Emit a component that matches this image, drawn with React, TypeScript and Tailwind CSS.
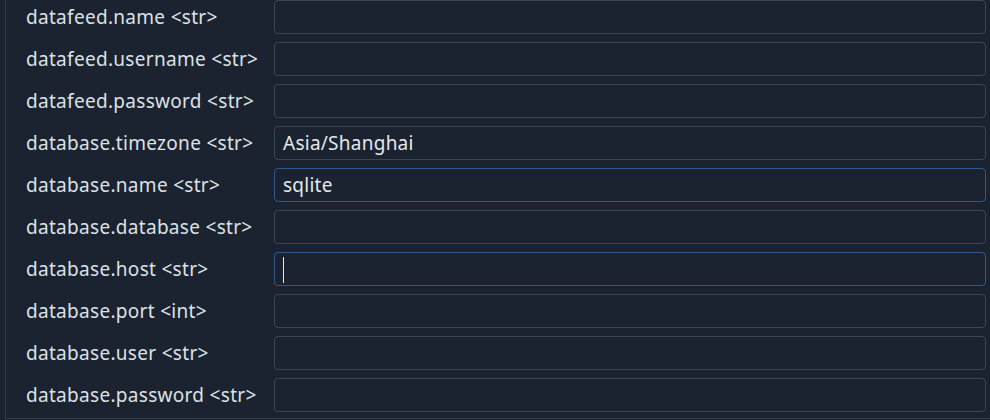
const fields: { label: string; value?: string; focus?: boolean; caret?: boolean }[] = [
  { label: "datafeed.name <str>" },
  { label: "datafeed.username <str>" },
  { label: "datafeed.password <str>" },
  { label: "database.timezone <str>", value: "Asia/Shanghai" },
  { label: "database.name <str>", value: "sqlite", focus: true },
  { label: "database.database <str>" },
  { label: "database.host <str>", focus: true, caret: true },
  { label: "database.port <int>" },
  { label: "database.user <str>" },
  { label: "database.password <str>" },
]

export default function App() {
  return (
    <div className="h-[420px] w-[990px] overflow-hidden bg-[#1b2330] font-['Noto_Sans',sans-serif]">
      <div className="ml-[5px] h-[419px] border-b border-l border-[#313b48]">
        <div className="flex flex-col gap-2 pr-[4px]">
          {fields.map((f) => (
            <div key={f.label} className="flex h-[34px] items-center">
              <span className="w-[268px] pl-[20px] pt-[1px] text-[19px] tracking-[0.3px] text-[#dce1e6]">
                {f.label}
              </span>
              <div
                className={`flex h-[34px] flex-1 items-center rounded-[4px] border px-[8px] pt-[1px] text-[19px] tracking-[0.25px] text-[#e4e8ec] ${
                  f.focus ? "border-[#2c5a8c]" : "border-[#3b4655]"
                }`}
              >
                {f.value}
                {f.caret && <span className="h-[26px] w-px bg-[#e6e6e6]" />}
              </div>
            </div>
          ))}
        </div>
      </div>
    </div>
  )
}
